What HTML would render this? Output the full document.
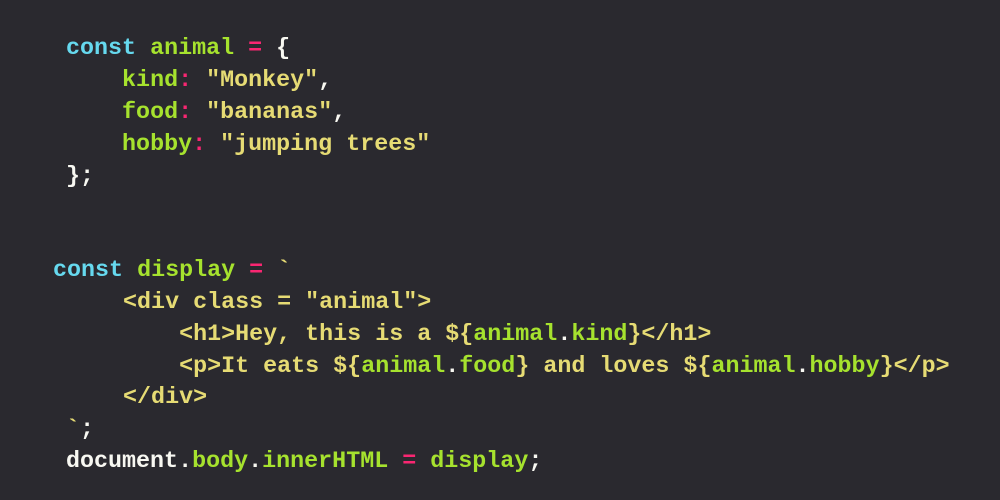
<!DOCTYPE html>
<html><head><style>
body{margin:0;width:1000px;height:500px;background:#2a292f;overflow:hidden}
.l{position:absolute;white-space:pre;font:bold 23.35px/32px "Liberation Mono",monospace;color:#f8f8f2}
.c{color:#66d9ef}.g{color:#a6e22e}.p{color:#f92672}.y{color:#e6db74}
</style></head><body>
<div class="l" style="left:66px;top:33px"><span class="c">const</span> <span class="g">animal</span> <span class="p">=</span> {</div>
<div class="l" style="left:66px;top:65px">    <span class="g">kind</span><span class="p">:</span> <span class="y">"Monkey"</span>,</div>
<div class="l" style="left:66px;top:97px">    <span class="g">food</span><span class="p">:</span> <span class="y">"bananas"</span>,</div>
<div class="l" style="left:66px;top:129px">    <span class="g">hobby</span><span class="p">:</span> <span class="y">"jumping trees"</span></div>
<div class="l" style="left:66px;top:161px">};</div>
<div class="l" style="left:53px;top:255px"><span class="c">const</span> <span class="g">display</span> <span class="p">=</span> <span class="y">`</span></div>
<div class="l y" style="left:53px;top:287px">     &lt;div class = "animal"&gt;</div>
<div class="l y" style="left:53px;top:319px">         &lt;h1&gt;Hey, this is a ${<span class="g">animal</span><span style="color:#f8f8f2">.</span><span class="g">kind</span>}&lt;/h1&gt;</div>
<div class="l y" style="left:53px;top:351px">         &lt;p&gt;It eats ${<span class="g">animal</span><span style="color:#f8f8f2">.</span><span class="g">food</span>} and loves ${<span class="g">animal</span><span style="color:#f8f8f2">.</span><span class="g">hobby</span>}&lt;/p&gt;</div>
<div class="l y" style="left:53px;top:382px">     &lt;/div&gt;</div>
<div class="l" style="left:66px;top:414px"><span class="y">`</span>;</div>
<div class="l" style="left:66px;top:446px">document.<span class="g">body</span>.<span class="g">innerHTML</span> <span class="p">=</span> <span class="g">display</span>;</div>
</body></html>
